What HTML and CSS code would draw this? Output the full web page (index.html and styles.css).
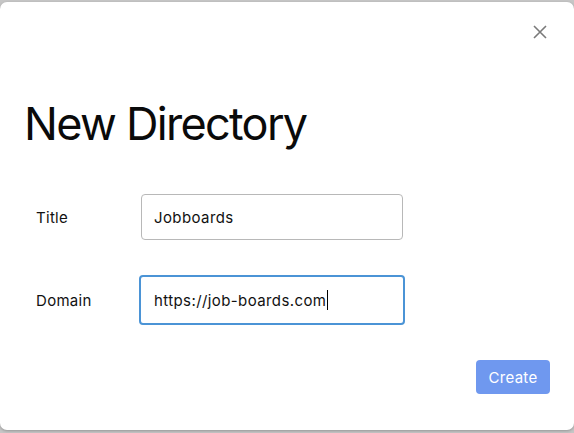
FILE: index.html
```html
<!DOCTYPE html>
<html>
<head>
<meta charset="utf-8">
<link rel="stylesheet" href="styles.css">
</head>
<body>
<div class="modal">
  <div class="top">
    <button class="close" aria-label="Close">
      <svg width="14" height="14" viewBox="0 0 14 14"><path d="M1 1L13 13M13 1L1 13" stroke="#7a7a7a" stroke-width="1.6" fill="none"/></svg>
    </button>
  </div>
  <h1 class="heading">New Directory</h1>
  <div class="form">
    <div class="row">
      <label class="label">Title</label>
      <div class="input">Jobboards</div>
    </div>
    <div class="row">
      <label class="label">Domain</label>
      <div class="input focused">https://job-boards.com<span class="caret"></span></div>
    </div>
  </div>
  <div class="actions">
    <button class="create">Create</button>
  </div>
</div>
</body>
</html>
```
FILE: styles.css
```css
html, body { margin: 0; padding: 0; }
body {
  background: #c6c6c6;
  width: 574px;
  height: 433px;
  overflow: hidden;
  font-family: Inter, "DejaVu Sans", sans-serif;
  color: #111;
}
.modal {
  margin-top: 2px;
  height: 428px;
  background: #fff;
  border-radius: 7px;
  box-shadow: 0 1px 3px rgba(0,0,0,0.25);
  box-sizing: border-box;
  padding: 0 24px 0 24px;
  display: flex;
  flex-direction: column;
}
.top {
  display: flex;
  justify-content: flex-end;
  padding-top: 23px;
  padding-right: 3px;
  height: 20px;
}
.close {
  border: 0;
  background: none;
  padding: 0;
  width: 14px;
  height: 14px;
  display: block;
}
.heading {
  margin: 52px 0 0 0;
  font-size: 45px;
  font-weight: 400;
  letter-spacing: -1.7px;
  line-height: 54px;
  color: #0a0a0a;
}
.form {
  margin-top: 43px;
  display: flex;
  flex-direction: column;
  gap: 35px;
}
.row {
  display: flex;
  align-items: center;
  padding-left: 12px;
}
.label {
  width: 105px;
  font-size: 15px;
  letter-spacing: 0.3px;
  color: #111;
}
.input {
  width: 262px;
  height: 46px;
  box-sizing: border-box;
  border: 1px solid #b8b8b8;
  border-radius: 4px;
  padding: 0 12px;
  display: flex;
  align-items: center;
  font-size: 15px;
  letter-spacing: 0.4px;
  color: #111;
}
.input.focused {
  border: 2px solid #4b94d6;
  width: 266px;
  height: 50px;
  margin-left: -2px;
  padding-left: 13px;
}
.caret {
  display: inline-block;
  width: 1px;
  height: 20px;
  background: #000;
  margin-left: 1px;
}
.actions {
  display: flex;
  justify-content: flex-end;
  margin-top: 35px;
}
.create {
  width: 74px;
  height: 34px;
  border: 0;
  border-radius: 4px;
  background: #6f98ef;
  color: #fff;
  font-family: Inter, "DejaVu Sans", sans-serif;
  font-size: 15px;
  letter-spacing: 0.3px;
  padding: 0;
}
```
